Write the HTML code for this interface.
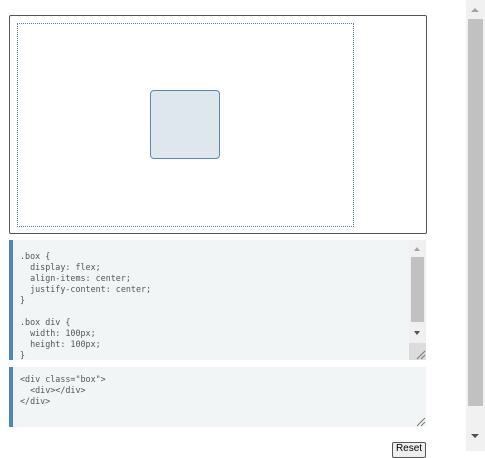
<!DOCTYPE html>
<html><head><style>
html,body{margin:0;padding:0;width:485px;height:451px;overflow:hidden;background:#fff;font-family:"Liberation Mono",monospace;}
.a{position:absolute;}
pre{margin:0;font-family:"DejaVu Sans Mono","Liberation Mono",monospace;font-size:8.4px;line-height:11px;color:#555;}
</style></head><body>
<div class="a" style="left:9px;top:15px;width:416px;height:217px;border:1px solid #555;border-radius:2px;"></div>
<div class="a" style="left:17px;top:23px;width:335px;height:202px;border:1px dotted #5a7fa0;"></div>
<div class="a" style="left:150px;top:90px;width:68px;height:67px;border:1px solid #5b88b0;border-radius:4px;background:#dfe7ee;"></div>

<div class="a" style="left:9px;top:240px;width:417px;height:120px;background:#f2f5f6;border-left:4px solid #4f86b8;box-sizing:border-box;"></div>
<pre class="a" style="left:20px;top:251px;">.box {
  display: flex;
  align-items: center;
  justify-content: center;
}

.box div {
  width: 100px;
  height: 100px;
}</pre>
<div class="a" style="left:409px;top:240px;width:17px;height:120px;background:#f0f0f0;"></div>
<div class="a" style="left:411px;top:257px;width:13px;height:65px;background:#c1c1c1;"></div>
<div class="a" style="left:414px;top:247px;width:0;height:0;border:3px solid transparent;border-bottom:4px solid #a3a3a3;border-top:0;"></div>
<div class="a" style="left:414px;top:331px;width:0;height:0;border:3px solid transparent;border-top:4px solid #505050;border-bottom:0;"></div>
<div class="a" style="left:409px;top:343px;width:17px;height:17px;background:#dcdcdc;"></div>
<svg class="a" style="left:416px;top:350px" width="10" height="10"><path d="M1 9L9 1M5 9L9 5" stroke="#777" stroke-width="1"/></svg>

<div class="a" style="left:9px;top:367px;width:417px;height:60px;background:#f2f5f6;border-left:4px solid #4f86b8;box-sizing:border-box;"></div>
<pre class="a" style="left:20px;top:374px;">&lt;div class="box"&gt;
  &lt;div&gt;&lt;/div&gt;
&lt;/div&gt;</pre>
<svg class="a" style="left:416px;top:417px" width="10" height="10"><path d="M1 9L9 1M5 9L9 5" stroke="#777" stroke-width="1"/></svg>

<div class="a" style="left:392px;top:442px;width:32px;height:14px;border:1px solid #555;border-radius:2px;background:#eee;font-family:'Liberation Sans',sans-serif;font-size:10px;text-align:center;line-height:12px;">Reset</div>

<div class="a" style="left:466px;top:0;width:19px;height:451px;background:#f1f1f1;"></div>
<div class="a" style="left:468px;top:19px;width:15px;height:387px;background:#c1c1c1;"></div>
<div class="a" style="left:471px;top:8px;width:0;height:0;border:4px solid transparent;border-bottom:4px solid #a3a3a3;border-top:0;"></div>
<div class="a" style="left:471px;top:434px;width:0;height:0;border:4px solid transparent;border-top:4px solid #505050;border-bottom:0;"></div>
</body></html>
